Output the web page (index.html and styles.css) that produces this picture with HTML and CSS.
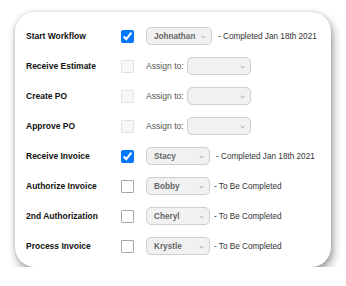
FILE: index.html
```html
<!DOCTYPE html>
<html>
<head>
<meta charset="utf-8">
<link rel="stylesheet" href="styles.css">
</head>
<body>
<div class="card">
  <div class="row">
    <span class="label">Start Workflow</span>
    <input type="checkbox" class="cb" checked>
    <span class="sel wide">Johnathan<svg class="arr" viewBox="0 0 6 4" width="5" height="4"><path d="M0.8 0.8 L3 3 L5.2 0.8" fill="none" stroke="#888" stroke-width="0.9"/></svg></span>
    <span class="status far">- Completed Jan 18th 2021</span>
  </div>
  <div class="row">
    <span class="label">Receive Estimate</span>
    <input type="checkbox" class="cb off" disabled>
    <span class="assign">Assign to:</span>
    <span class="sel">&nbsp;<svg class="arr" viewBox="0 0 6 4" width="5" height="4"><path d="M0.8 0.8 L3 3 L5.2 0.8" fill="none" stroke="#888" stroke-width="0.9"/></svg></span>
  </div>
  <div class="row">
    <span class="label">Create PO</span>
    <input type="checkbox" class="cb off" disabled>
    <span class="assign">Assign to:</span>
    <span class="sel">&nbsp;<svg class="arr" viewBox="0 0 6 4" width="5" height="4"><path d="M0.8 0.8 L3 3 L5.2 0.8" fill="none" stroke="#888" stroke-width="0.9"/></svg></span>
  </div>
  <div class="row">
    <span class="label">Approve PO</span>
    <input type="checkbox" class="cb off" disabled>
    <span class="assign">Assign to:</span>
    <span class="sel">&nbsp;<svg class="arr" viewBox="0 0 6 4" width="5" height="4"><path d="M0.8 0.8 L3 3 L5.2 0.8" fill="none" stroke="#888" stroke-width="0.9"/></svg></span>
  </div>
  <div class="row">
    <span class="label">Receive Invoice</span>
    <input type="checkbox" class="cb" checked>
    <span class="sel">Stacy<svg class="arr" viewBox="0 0 6 4" width="5" height="4"><path d="M0.8 0.8 L3 3 L5.2 0.8" fill="none" stroke="#888" stroke-width="0.9"/></svg></span>
    <span class="status far">- Completed Jan 18th 2021</span>
  </div>
  <div class="row">
    <span class="label">Authorize Invoice</span>
    <input type="checkbox" class="cb off">
    <span class="sel">Bobby<svg class="arr" viewBox="0 0 6 4" width="5" height="4"><path d="M0.8 0.8 L3 3 L5.2 0.8" fill="none" stroke="#888" stroke-width="0.9"/></svg></span>
    <span class="status">- To Be Completed</span>
  </div>
  <div class="row">
    <span class="label">2nd Authorization</span>
    <input type="checkbox" class="cb off">
    <span class="sel">Cheryl<svg class="arr" viewBox="0 0 6 4" width="5" height="4"><path d="M0.8 0.8 L3 3 L5.2 0.8" fill="none" stroke="#888" stroke-width="0.9"/></svg></span>
    <span class="status">- To Be Completed</span>
  </div>
  <div class="row">
    <span class="label">Process Invoice</span>
    <input type="checkbox" class="cb off">
    <span class="sel">Krystle<svg class="arr" viewBox="0 0 6 4" width="5" height="4"><path d="M0.8 0.8 L3 3 L5.2 0.8" fill="none" stroke="#888" stroke-width="0.9"/></svg></span>
    <span class="status">- To Be Completed</span>
  </div>
</div>
</body>
</html>
```
FILE: styles.css
```css
html, body {
  margin: 0;
  padding: 0;
  background: #ffffff;
}
body {
  padding: 12px 0 0 15px;
  font-family: "Liberation Sans", Arial, sans-serif;
}
.card {
  width: 316px;
  height: 255px;
  box-sizing: border-box;
  background: #ffffff;
  border-radius: 20px;
  box-shadow: 2px 5px 10px rgba(0, 0, 0, 0.38), 0 0 4px rgba(0, 0, 0, 0.14);
  padding: 9px 0 0 11px;
}
.row {
  display: flex;
  align-items: center;
  height: 30px;
}
.label {
  width: 95px;
  flex: none;
  font-weight: bold;
  font-size: 8.5px;
  color: #111;
}
.cb {
  flex: none;
  width: 13px;
  height: 13px;
  margin: 0 12px 0 0;
}
.cb.off {
  appearance: none;
  -webkit-appearance: none;
  box-sizing: border-box;
  border: 1px solid #a8a8a8;
  border-radius: 1px;
  background: #ffffff;
}
.cb.off:disabled {
  border-color: #e3e3e3;
  background: #f7f7f7;
}
.sel {
  flex: none;
  box-sizing: border-box;
  width: 64px;
  height: 18px;
  display: flex;
  align-items: center;
  justify-content: space-between;
  padding: 0 5px 0 7px;
  border: 1px solid #cfcfcf;
  border-radius: 5px;
  background: #f1f1f1;
  font-size: 8.2px;
  font-weight: bold;
  color: #666;
}
.sel.wide {
  width: 66px;
}
.arr {
  flex: none;
  margin-top: 1px;
}
.assign {
  font-size: 8.6px;
  color: #555;
  width: 41px;
  flex: none;
}
.status {
  font-size: 8.2px;
  color: #333;
  margin-left: 4px;
}
.status.far {
  margin-left: 6px;
}
```
